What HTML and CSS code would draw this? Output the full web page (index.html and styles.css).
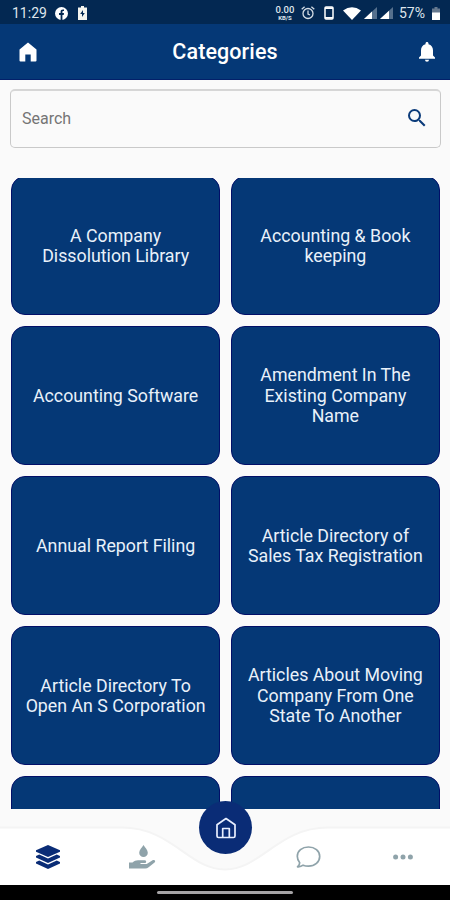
FILE: index.html
```html
<!DOCTYPE html>
<html lang="en">
<head>
    <meta charset="UTF-8">
    <title>Categories</title>
    <meta name="viewport" content="width=device-width, initial-scale=1.0">
    <link rel="stylesheet" href="styles.css">
</head>
<body>
    <div class="app">
        <div class="status-bar">
            <span class="time">11:29</span>
            <svg class="icon-fb" width="13" height="13" viewBox="0 0 13 13"><circle cx="6.5" cy="6.5" r="6.5" fill="#fff"/><path d="M5.6 13V8H4V6h1.6V4.8c0-1.8 1-2.6 3.4-2.3v1.6c-1.200-.1-1.600.1-1.600.9v1H9L8.700 8H7.400v5z" fill="#032852"/></svg>
            <svg class="icon-saver" width="9" height="14" viewBox="0 0 9 14"><path d="M3 0h3v1.500h3V14H0V1.500h3z" fill="#f4f4ee"/><path d="M5 4v3h1.800L4 11V8H2.200z" fill="#032852"/></svg>
            <div class="status-right">
                <div class="net-speed"><span>0.00</span><small>KB/S</small></div>
                <svg class="icon-alarm" width="14" height="14" viewBox="0 0 14 14" fill="none" stroke="#d5dde5" stroke-width="1.300"><circle cx="7" cy="7.500" r="5"/><path d="M7 4.500V8l2 1M.7 3.300L3.600.8M13.300 3.300L10.400.8"/></svg>
                <svg class="icon-phone" width="10" height="14" viewBox="0 0 10 14"><rect x="1" y="1" width="8" height="12" rx="1" fill="none" stroke="#fff" stroke-width="1.500"/><path d="M1 2.200h8M1 11.800h8" stroke="#fff" stroke-width="1.800"/></svg>
                <svg class="icon-wifi" width="18" height="13" viewBox="0 0 18 13"><path d="M0 3.500Q9-3 18 3.500L9 13z" fill="#fff"/></svg>
                <svg class="icon-signal" width="13" height="12" viewBox="0 0 13 12"><path d="M0 12L13 0v12z" fill="#56708d"/><path d="M0 12l8-7.400V12z" fill="#fff"/></svg>
                <svg class="icon-signal" width="13" height="12" viewBox="0 0 13 12"><path d="M0 12L13 0v12z" fill="#56708d"/><path d="M0 12l9-8.300V12z" fill="#fff"/></svg>
                <span class="percent">57%</span>
                <svg class="icon-battery" width="8" height="13" viewBox="0 0 8 13"><path d="M2.500 0h3v1.500H8V13H0V1.500h2.500z" fill="#66798f"/><path d="M0 5.500h8V13H0z" fill="#fff"/></svg>
            </div>
        </div>

        <header class="header">
            <svg class="icon-home" width="18" height="20" viewBox="0 0 18 20"><path d="M9 .5l8.500 7V18.500q0 1-1 1H11.700V12.500H6.300v7H1.500q-1 0-1-1V7.500z" fill="#fff"/></svg>
            <h1>Categories</h1>
            <svg class="icon-bell" width="16" height="20" viewBox="0 0 16 20"><path d="M8 0c.9 0 1.500.6 1.500 1.500v.7c2.900.7 4.500 3.200 4.500 6.100v5.200l2 2v1.200H0v-1.200l2-2V8.300c0-2.900 1.600-5.400 4.500-6.100v-.7C6.500.6 7.100 0 8 0zM6 17.800h4a2 2 0 0 1-4 0z" fill="#fff"/></svg>
        </header>

        <div class="search">
            <span>Search</span>
            <svg width="24" height="24" viewBox="0 0 24 24"><path d="M15.500 14h-.79l-.28-.27A6.470 6.470 0 0 0 16 9.500 6.500 6.500 0 1 0 9.500 16c1.610 0 3.090-.59 4.230-1.570l.27.28v.79l5 4.990L20.490 19l-4.990-5zm-6 0C7.010 14 5 11.990 5 9.500S7.010 5 9.500 5 14 7.010 14 9.500 11.990 14 9.500 14z" fill="#0b3b7a"/></svg>
        </div>

        <main class="categories">
            <div class="grid">
                <div class="card">A Company<br>Dissolution Library</div>
                <div class="card">Accounting &amp; Book<br>keeping</div>
                <div class="card">Accounting Software</div>
                <div class="card">Amendment In The<br>Existing Company<br>Name</div>
                <div class="card">Annual Report Filing</div>
                <div class="card">Article Directory of<br>Sales Tax Registration</div>
                <div class="card">Article Directory To<br>Open An S Corporation</div>
                <div class="card">Articles About Moving<br>Company From One<br>State To Another</div>
                <div class="card"></div>
                <div class="card"></div>
            </div>
        </main>

        <nav class="tab-bar">
            <!-- bar shape with the dip under the home button -->
            <svg class="tab-shape" width="450" height="60" viewBox="0 0 450 60"><path d="M-3 2.500H122C172 2.500 189 44.500 225 44.500S278 2.500 328 2.500H453V63H-3z" fill="#fff" stroke="#f4f4f4" stroke-width="2"/></svg>
            <div class="tabs">
                <svg width="26" height="26" viewBox="0 0 26 26" fill="#0a2c76"><path d="M13 1l12 5.300v1.400L13 13 1 7.700V6.300z"/><path d="M1 12l3.200-1.400L13 14.500l8.800-3.900L25 12v1.500L13 19 1 13.500z"/><path d="M1 18l3.200-1.400L13 20.500l8.800-3.900L25 18v1.500L13 25 1 19.500z"/></svg>
                <svg width="28" height="26" viewBox="0 0 28 26" fill="#8fa3aa"><path d="M15.500 1c1.600 2.600 4.300 5 4.300 7.800a4.300 4.300 0 0 1-8.600 0C11.200 6 13.900 3.600 15.500 1z"/><path d="M1 17h3.500c1.700-1.500 3.400-2.200 5.500-2.200h6.500c2.200 0 2.200 2.700 0 2.700h-4v1h6.200l5.500-3.600c2.200-1.400 3.900.6 2.400 2l-6 4.900c-1 .8-2 1.200-3.300 1.200H1z" transform="translate(0 1.500)"/></svg>
                <span></span>
                <svg width="26" height="24" viewBox="0 0 26 24"><path d="M13.500 2C7 2 2.300 6 2.300 11.200c0 2.500.9 4.700 2.400 6.500 0 1.700-.8 2.900-2.200 4.100 2.200.2 4.200-.5 5.600-1.600 1.600.6 3.400.9 5.400.9 6.300 0 11.200-4.300 11.200-9.700S19.800 2 13.500 2z" fill="none" stroke="#8fa3aa" stroke-width="1.700" stroke-linejoin="round"/></svg>
                <svg width="20" height="6" viewBox="0 0 20 6" fill="#8fa3aa"><circle cx="2.600" cy="3" r="2.500"/><circle cx="10" cy="3" r="2.500"/><circle cx="17.400" cy="3" r="2.500"/></svg>
            </div>
            <div class="home-btn">
                <svg width="22" height="22" viewBox="0 0 22 22" fill="none" stroke="#e8efff" stroke-width="1.700" stroke-linejoin="round"><path d="M2 7.800L11 1.500l9 6.300V19q0 1.500-1.500 1.500h-15Q2 20.500 2 19z"/><path d="M7.700 20.500v-9h6.600v9"/></svg>
            </div>
        </nav>
        <div class="gesture-bar"><span></span></div>
    </div>
</body>
</html>
```

FILE: styles.css
```css
* {
    box-sizing: border-box;
}
body {
    margin: 0;
    background: #fafafa;
    font-family: Roboto, sans-serif;
}
svg {
    display: block;
    flex: none;
}
.app {
    display: flex;
    flex-direction: column;
    width: 450px;
    height: 900px;
    overflow: hidden;
}

/* Status bar */
.status-bar {
    display: flex;
    align-items: center;
    flex: none;
    height: 24px;
    padding: 2px 10px 0 12px;
    background: #032852;
    color: #dfe5ec;
    font-size: 14px;
}
.time {
    width: 35px;
}
.icon-fb {
    margin-left: 8px;
}
.icon-saver {
    margin-left: 10px;
}
.status-right {
    display: flex;
    align-items: center;
    margin-left: auto;
}
.net-speed {
    display: flex;
    flex-direction: column;
    align-items: center;
    width: 18px;
    font-size: 9.5px;
    font-weight: 500;
    line-height: 10px;
}
.net-speed small {
    font-size: 6px;
    font-weight: bold;
    line-height: 6px;
}
.icon-alarm {
    margin-left: 7px;
}
.icon-phone {
    margin-left: 9px;
}
.icon-wifi {
    margin-left: 9px;
}
.icon-signal {
    margin-left: 3px;
}
.percent {
    width: 28px;
    margin-left: 6px;
}
.icon-battery {
    margin-left: 5px;
}

/* Header */
.header {
    display: flex;
    align-items: center;
    justify-content: space-between;
    flex: none;
    height: 56px;
    padding: 0 15px 0 19px;
    background: #053876;
    border-bottom: 1px solid #03206a;
    color: #fff;
}
.header h1 {
    margin: 0 6px 0 0;
    font-size: 21.5px;
    font-weight: 500;
    letter-spacing: 0.1px;
}

/* Search */
.search {
    display: flex;
    align-items: center;
    justify-content: space-between;
    flex: none;
    height: 59px;
    margin: 9px 9px 0 10px;
    padding: 0 11px 2px;
    border: 1px solid #c9c9c9;
    border-top: 2px solid #d6d6d6;
    border-radius: 5px;
    color: #757575;
    font-size: 16px;
}

/* Category grid, scrolled down a little */
.categories {
    flex: none;
    height: 631px;
    margin-top: 30px;
    padding: 0 10px 0 11px;
    overflow: hidden;
}
.grid {
    display: grid;
    grid-template-columns: 1fr 1fr;
    grid-auto-rows: 139.5px;
    gap: 10.5px;
    margin-top: -2.5px;
}
.card {
    display: flex;
    align-items: center;
    justify-content: center;
    padding-top: 1.5px;
    background: #053876;
    border: 1px solid #020f68;
    border-radius: 14px;
    color: #e9f1fa;
    font-size: 17.8px;
    line-height: 20.5px;
    text-align: center;
    white-space: nowrap;
}

/* Bottom tabs */
.tab-bar {
    position: relative;
    flex: none;
    height: 60px;
    margin-top: 15.5px;
}
.tab-shape {
    position: absolute;
    top: 0;
    left: 0;
}
.tabs {
    position: relative;
    display: grid;
    grid-template-columns: 95px 94px 72px 94px 95px;
    align-items: center;
    justify-items: center;
    height: 60px;
    padding-top: 5px;
}
.home-btn {
    position: absolute;
    top: -23.5px;
    left: 199px;
    display: flex;
    align-items: center;
    justify-content: center;
    width: 53px;
    height: 53px;
    border-radius: 50%;
    background: #0a2c76;
}
.gesture-bar {
    display: flex;
    justify-content: center;
    flex: 1;
    padding-top: 6px;
    background: #000;
}
.gesture-bar span {
    width: 136px;
    height: 3px;
    border-radius: 2px;
    background: #a5a3a5;
}
```
